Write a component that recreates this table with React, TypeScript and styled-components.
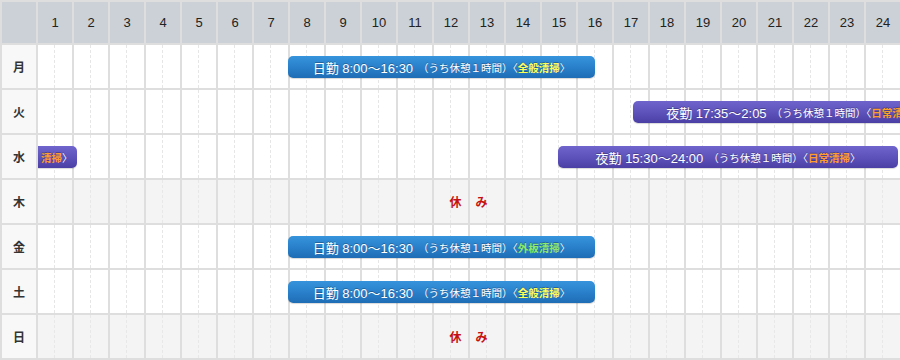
import React from 'react'
import styled, { createGlobalStyle, css } from 'styled-components'

const GlobalStyle = createGlobalStyle`
  html, body {
    margin: 0;
    padding: 0;
    background: #dedede;
  }
  body {
    font-family: "Liberation Sans", "Noto Sans CJK JP", sans-serif;
  }
`

const HOURS = Array.from({ length: 24 }, (_, i) => i + 1)
const COL = 36

type Shift = {
  kind: 'day' | 'night'
  x: number
  w: number
  title: string
  task: string
  tone: 'yellow' | 'green' | 'orange'
  cont?: boolean
}

type Day = {
  label: string
  off?: boolean
  shifts: Shift[]
}

// bar position from clock hours (column "1" starts at 1:00)
const at = (h: number) => (h - 1) * COL - 2
const span = (from: number, to: number) => (to - from) * COL + 1

const dayShift = (task: string, tone: Shift['tone']): Shift => ({
  kind: 'day',
  x: at(8),
  w: span(8, 16.5),
  title: '日勤 8:00～16:30',
  task,
  tone,
})

const DAYS: Day[] = [
  { label: '月', shifts: [dayShift('全般清掃', 'yellow')] },
  {
    label: '火',
    shifts: [
      {
        kind: 'night',
        x: at(17 + 35 / 60),
        w: 324,
        title: '夜勤 17:35～2:05',
        task: '日常清掃',
        tone: 'orange',
      },
    ],
  },
  {
    label: '水',
    shifts: [
      { kind: 'night', x: 0, w: 39, title: '', task: '清掃', tone: 'orange', cont: true },
      {
        kind: 'night',
        x: at(15.5),
        w: 340,
        title: '夜勤 15:30～24:00',
        task: '日常清掃',
        tone: 'orange',
      },
    ],
  },
  { label: '木', off: true, shifts: [] },
  { label: '金', shifts: [dayShift('外板清掃', 'green')] },
  { label: '土', shifts: [dayShift('全般清掃', 'yellow')] },
  { label: '日', off: true, shifts: [] },
]

const Table = styled.div`
  width: 900px;
  height: 360px;
  box-sizing: border-box;
  padding: 2px 0 0 2px;
  display: flex;
  flex-direction: column;
  gap: 2px;
  background: #dedede;
  overflow: hidden;
`

const Row = styled.div<{ $head?: boolean }>`
  display: flex;
  gap: 2px;
  height: ${(p) => (p.$head ? 41 : 43)}px;
  flex-shrink: 0;
`

const Label = styled.div<{ $head?: boolean }>`
  width: 34px;
  flex-shrink: 0;
  display: flex;
  align-items: center;
  justify-content: center;
  background: ${(p) => (p.$head ? '#cbd1d6' : '#f8f8f8')};
  font-family: "Noto Sans CJK JP", sans-serif;
  font-weight: bold;
  font-size: 12px;
  color: #333;
`

const Track = styled.div`
  position: relative;
  flex: 1;
  display: grid;
  grid-template-columns: repeat(24, 34px);
  gap: 2px;
  overflow: hidden;
`

const HourHead = styled.div`
  background: #cbd1d6;
  display: flex;
  align-items: center;
  justify-content: center;
  font-size: 13px;
  color: #222;
`

const Cell = styled.div<{ $off?: boolean }>`
  position: relative;
  background: ${(p) => (p.$off ? '#f4f4f4' : '#ffffff')};
  &::after {
    content: '';
    position: absolute;
    top: 0;
    bottom: 0;
    left: 16px;
    border-left: 1px dashed ${(p) => (p.$off ? '#e8e8e8' : '#e6e6e6')};
  }
`

const Bar = styled.div<{ $kind: Shift['kind']; $cont?: boolean }>`
  position: absolute;
  top: 11px;
  height: 22px;
  box-sizing: border-box;
  border-radius: 5px;
  display: flex;
  align-items: center;
  justify-content: center;
  white-space: nowrap;
  color: #fff;
  font-family: "Liberation Sans", "Noto Sans CJK JP", sans-serif;
  font-size: 13px;
  text-shadow: 0 -1px 0 rgba(0, 0, 0, 0.25);
  box-shadow: 0 1px 1px rgba(0, 0, 0, 0.15);
  background: ${(p) =>
    p.$kind === 'day'
      ? 'linear-gradient(#3694dc, #2a80cb 50%, #1e6db5)'
      : 'linear-gradient(#6e64cc, #5e53bb 50%, #4b3fa5)'};
  ${(p) =>
    p.$cont &&
    css`
      border-top-left-radius: 0;
      border-bottom-left-radius: 0;
      justify-content: flex-start;
      padding-left: 3px;
    `}
`

const Note = styled.span`
  font-family: "Noto Sans CJK JP", sans-serif;
  font-size: 10.5px;
  margin-left: 5px;
`

const TONES = { yellow: '#ffff55', green: '#8ee86a', orange: '#ff9d2a' }

const Task = styled.span<{ $tone: Shift['tone'] }>`
  font-family: "Noto Sans CJK JP", sans-serif;
  font-size: 10.5px;
  font-weight: bold;
  color: ${(p) => TONES[p.$tone]};
`

const Off = styled.div`
  position: absolute;
  inset: 0;
  display: flex;
  align-items: center;
  justify-content: center;
  font-family: "Noto Sans CJK JP", sans-serif;
  font-weight: bold;
  font-size: 12px;
  color: #c41010;
  letter-spacing: 1px;
`

const ShiftBar = ({ s }: { s: Shift }) => (
  <Bar $kind={s.kind} $cont={s.cont} style={{ left: s.x, width: s.w }}>
    {s.cont ? (
      <>
        <Task $tone={s.tone}>{s.task}</Task>
        <Note style={{ marginLeft: 0 }}>〉</Note>
      </>
    ) : (
      <>
        {s.title}
        <Note>
          （うち休憩１時間）〈<Task $tone={s.tone}>{s.task}</Task>〉
        </Note>
      </>
    )}
  </Bar>
)

export default function App() {
  return (
    <>
      <GlobalStyle />
      <Table>
        <Row $head>
          <Label $head />
          <Track>
            {HOURS.map((h) => (
              <HourHead key={h}>{h}</HourHead>
            ))}
          </Track>
        </Row>
        {DAYS.map((d) => (
          <Row key={d.label}>
            <Label>{d.label}</Label>
            <Track>
              {HOURS.map((h) => (
                <Cell key={h} $off={d.off} />
              ))}
              {d.off && <Off>休　み</Off>}
              {d.shifts.map((s, i) => (
                <ShiftBar key={i} s={s} />
              ))}
            </Track>
          </Row>
        ))}
      </Table>
    </>
  )
}
